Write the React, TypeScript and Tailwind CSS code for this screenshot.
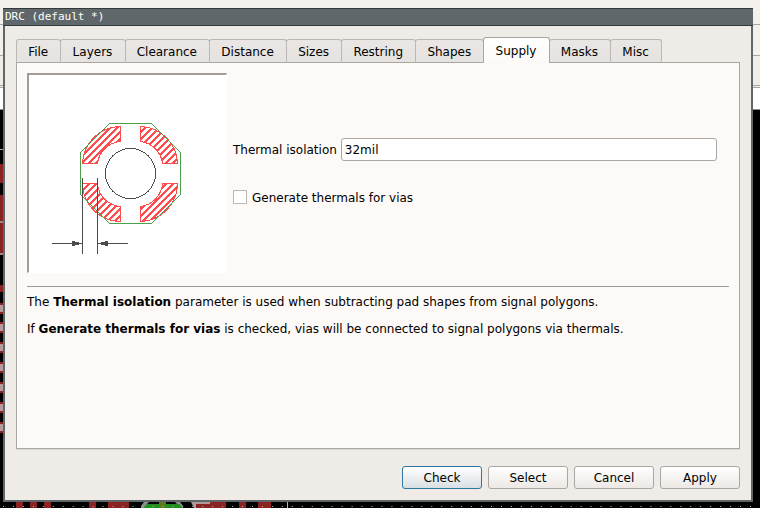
import React, { useState } from 'react'

const tabs = ['File', 'Layers', 'Clearance', 'Distance', 'Sizes', 'Restring', 'Shapes', 'Supply', 'Masks', 'Misc']

const pads = [303, 322, 342, 362, 382, 402, 422]
const traces = [[16, 7], [30, 7], [44, 7], [89, 7], [108, 21], [196, 30], [239, 7], [258, 13]]

// Board editor that shows around the dialog
const Board = () => {
  return (
    <div className="absolute inset-0 flex flex-col bg-black" aria-hidden="true">
      <div className="h-[25px] shrink-0 border-b border-[#a9a6a2] bg-[#f4f1ec]" />
      <div className="h-[31px] shrink-0 border-b border-[#a9a6a2] bg-[#f4f1ec]" />
      <div className="h-8 shrink-0 border-b border-[#a9a6a2] bg-[#f0ece7]">
        <div className="h-[30px] border-b border-[#a9a6a2]" />
      </div>
      <div className="h-[22px] shrink-0 border-b border-[#8a8a8a] bg-white" />
      <svg className="absolute left-0 top-0" width="3" height="508" fill="#8b2323">
        <rect y="149" width="3" height="1" fill="#aaa" />
        <rect y="164" width="3" height="19" />
        <rect y="195" width="3" height="58" />
        <rect y="221" width="3" height="2" fill="#9a8a8a" />
        <rect y="253" width="3" height="2" fill="#9a8a8a" />
        <rect y="285" width="3" height="7" />
        {pads.map((y) => (
          <g key={y}>
            <rect y={y} width="3" height="11" />
            <rect y={y + 2} width="3" height="7" fill="#b89a9a" />
          </g>
        ))}
      </svg>
      <svg className="absolute bottom-0 left-0" width="760" height="6" fill="#8b2323">
        {traces.map(([x, w]) => (
          <rect key={x} x={x} width={w} height="6" />
        ))}
        <path d="M141 6V4l3-4h36l3 4v2z" fill="#8f8c8f" />
        <path d="M149 0h26l2 2h-30z" fill="#000" />
        <path d="M143 6l4-4h32l4 4z" fill="#1f8f1f" />
        <rect x="159" width="7" height="6" fill="#5c7a1c" />
        <path d="M191 0h19v2h-14v4h-2z" fill="#b09a9a" />
        <rect x="287" width="1" height="6" fill="#b5b5b5" />
        <path d="M3 4.5h757" stroke="#b5b5b5" strokeDasharray="1 8.96" />
      </svg>
    </div>
  )
}

// Pad with its four thermal segments and the isolation dimension
const ThermalDrawing = () => {
  return (
    <svg viewBox="29 75 197 197" width="197" height="197" shapeRendering="crispEdges" role="img" aria-label="Thermal isolation">
      <defs>
        <pattern id="hatch" width="7" height="7" patternUnits="userSpaceOnUse">
          <path d="M-1 8L8 -1M-1 1L1 -1M6 8L8 6" stroke="#ff4b4b" strokeWidth="2" />
        </pattern>
      </defs>
      <g fill="url(#hatch)" stroke="#ff4b4b">
        <path d="M120.5 126.5V141.5A25 25 0 0 0 97.5 163.5H82.5A38 38 0 0 1 120.5 126.5Z" />
        <path d="M140.5 126.5V141.5A25 25 0 0 1 162.5 163.5H177.5A38 38 0 0 0 140.5 126.5Z" />
        <path d="M120.5 221.5V206.5A25 25 0 0 1 97.5 183.5H82.5A38 38 0 0 0 120.5 221.5Z" />
        <path d="M140.5 221.5V206.5A25 25 0 0 0 162.5 183.5H177.5A38 38 0 0 1 140.5 221.5Z" />
      </g>
      <path d="M109.5 123.5H151.5L180.5 152.5V194.5L151.5 223.5H109.5L80.5 194.5V152.5Z" fill="none" stroke="#4aa34a" />
      <circle cx="130.5" cy="173.5" r="25" fill="none" stroke="#4b4b4b" />
      <path d="M82.5 178V254M97.5 178V254M52 243.5H82M98 243.5H128" fill="none" stroke="#4b4b4b" />
      <path d="M82 243.5L72 240.5V246.5ZM98 243.5L108 240.5V246.5Z" fill="#4b4b4b" />
    </svg>
  )
}

const DialogButton = ({ label, primary = false }: { label: string; primary?: boolean }) => {
  return (
    <button
      type="button"
      className={
        primary
          ? 'h-[23px] w-20 rounded-[3px] border border-[#2d76a1] bg-linear-to-b from-white to-[#d9dfe2] pt-0.5'
          : 'h-[23px] w-20 rounded-[3px] border border-[#aaa6a3] bg-linear-to-b from-white to-[#ece8e5] pt-0.5'
      }
    >
      {label}
    </button>
  )
}

const App = () => {
  const [active, setActive] = useState('Supply')
  const [isolation, setIsolation] = useState('32mil')
  const [vias, setVias] = useState(false)

  return (
    <div className="relative flex min-h-screen flex-col overflow-hidden pb-1.5 pl-[3px] pr-[7px] pt-2 font-['DejaVu_Sans',sans-serif] text-[12px] leading-[15px] text-black">
      <Board />

      {/* Dialog window */}
      <div className="relative flex flex-1 flex-col bg-[#efebe6]">
        <div className="h-[18px] border-y border-[#33383b] bg-[#5f676a] pl-0.5 font-['DejaVu_Sans_Mono',monospace] text-[11px] leading-4 text-white">
          DRC (default *)
        </div>

        <div className="flex flex-1 flex-col border-x-2 border-b-2 border-[#5f676a] px-[11px] pb-[11px] pt-[11px]">
          {/* Tabs */}
          <div role="tablist" className="relative z-10 -mb-px flex w-full max-w-[645px] items-end">
            {tabs.map((tab) => (
              <button
                key={tab}
                type="button"
                role="tab"
                aria-selected={tab === active}
                onClick={() => setActive(tab)}
                className={
                  tab === active
                    ? 'relative z-10 -mr-px h-[26px] grow rounded-t-[3px] border border-b-0 border-[#aaa6a3] bg-linear-to-b from-white to-[#fdf9f6] pl-[11px] pr-3 pt-0.5'
                    : '-mr-px h-6 grow rounded-t-[3px] border border-[#bab7b4] border-b-[#aaa6a3] bg-linear-to-b from-[#e9e6e3] to-[#e5e2df] pl-[11px] pr-3 pt-0.5'
                }
              >
                {tab}
              </button>
            ))}
          </div>

          {/* Tab page */}
          <div role="tabpanel" className="flex-1 border border-[#aaa6a3] bg-[#fdf9f6] p-2.5 shadow-[0_1px_0_#dcd8d4]">
            <div className="flex gap-1.5">
              <div className="size-[200px] shrink-0 border-b border-r border-l-2 border-t-2 border-b-white border-l-[#9f9c99] border-r-white border-t-[#9f9c99] bg-white">
                <ThermalDrawing />
              </div>
              <div className="flex flex-1 flex-col justify-center gap-[25px] pr-3">
                <div className="flex items-center gap-1">
                  <label htmlFor="isolation" className="pt-0.5">Thermal isolation</label>
                  <input
                    id="isolation"
                    type="text"
                    value={isolation}
                    onChange={(e) => setIsolation(e.target.value)}
                    className="h-[23px] min-w-0 flex-1 rounded-[3px] border border-[#aaa6a3] bg-white px-[3px] outline-none"
                  />
                </div>
                <div className="flex h-[22px] items-center gap-[5px]">
                  <input
                    id="vias"
                    type="checkbox"
                    checked={vias}
                    onChange={(e) => setVias(e.target.checked)}
                    className="size-3.5 appearance-none border border-[#bab7b4] bg-white checked:bg-[#2d76a1]"
                  />
                  <label htmlFor="vias" className="pt-0.5 leading-4">Generate thermals for vias</label>
                </div>
              </div>
            </div>

            <hr className="mb-2 mt-[13px] border-[#9f9c99]" />

            <p>
              The <b>Thermal isolation</b> parameter is used when subtracting pad shapes from signal polygons.
            </p>
            <p className="mt-3">
              If <b>Generate thermals for vias</b> is checked, vias will be connected to signal polygons via thermals.
            </p>
          </div>

          {/* Actions */}
          <div className="mt-[17px] flex justify-end gap-1.5">
            <DialogButton label="Check" primary />
            <DialogButton label="Select" />
            <DialogButton label="Cancel" />
            <DialogButton label="Apply" />
          </div>
        </div>
      </div>
    </div>
  )
}

export default App
